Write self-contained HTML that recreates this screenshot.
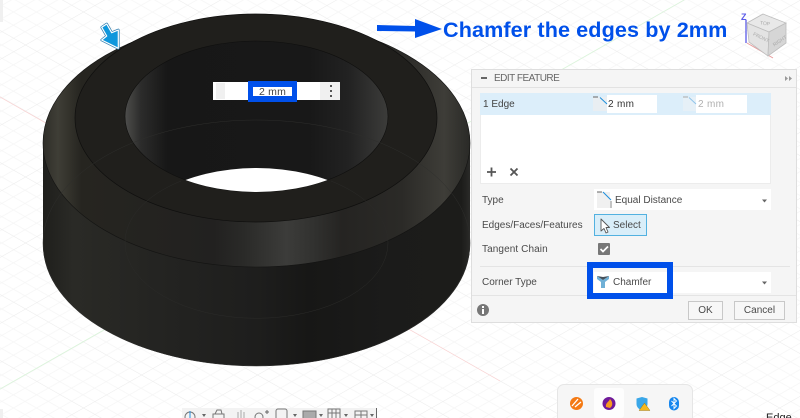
<!DOCTYPE html>
<html><head><meta charset="utf-8"><style>
html,body{margin:0;padding:0;background:#fff}
#r{position:relative;width:800px;height:418px;overflow:hidden;background:#fff;font-family:"Liberation Sans",sans-serif;font-size:10px;color:#4a4a4a}
#r svg{position:absolute;left:0;top:0}
.a{position:absolute;white-space:nowrap}
.b{position:absolute;box-sizing:border-box}
</style></head><body><div id="r">
<svg width="800" height="418" viewBox="0 0 800 418" xmlns="http://www.w3.org/2000/svg">
<defs>
<pattern id="g" width="50" height="50" patternUnits="userSpaceOnUse" patternTransform="matrix(1.16 .66 1.16 -.66 25 375)">
<path d="M10 0V50M20 0V50M30 0V50M40 0V50M0 10H50M0 20H50M0 30H50M0 40H50" stroke="#f6f6f6" stroke-width=".7" fill="none"/>
<path d="M0 0V50M0 0H50" stroke="#ebebeb" stroke-width=".9" fill="none"/>
</pattern>
<linearGradient id="w" gradientUnits="userSpaceOnUse" x1="43" x2="470" y1="0" y2="0">
<stop offset="0" stop-color="#1f1f1c"/><stop offset=".07" stop-color="#2a2a26"/><stop offset=".3" stop-color="#232321"/><stop offset=".5" stop-color="#1e1e1d"/><stop offset=".62" stop-color="#171716"/><stop offset=".8" stop-color="#1b1b1a"/><stop offset=".98" stop-color="#1c1c1a"/><stop offset="1" stop-color="#2a2a28"/>
</linearGradient>
<linearGradient id="c" gradientUnits="userSpaceOnUse" x1="43" x2="470" y1="0" y2="0">
<stop offset="0" stop-color="#2e2d28"/><stop offset=".035" stop-color="#3f3e36"/><stop offset=".09" stop-color="#262520"/><stop offset=".4" stop-color="#222120"/><stop offset=".47" stop-color="#2a2a28"/><stop offset=".57" stop-color="#3c3c3a"/><stop offset=".63" stop-color="#323230"/><stop offset=".7" stop-color="#252422"/><stop offset=".84" stop-color="#2b2a27"/><stop offset=".94" stop-color="#3e3d38"/><stop offset="1" stop-color="#2a2a27"/>
</linearGradient>
<linearGradient id="h" gradientUnits="userSpaceOnUse" x1="125" x2="388" y1="0" y2="0">
<stop offset="0" stop-color="#4e4e4c"/><stop offset=".06" stop-color="#2c2c2b"/><stop offset=".16" stop-color="#171717"/><stop offset=".7" stop-color="#181818"/><stop offset=".85" stop-color="#222"/><stop offset="1" stop-color="#3c3c3a"/>
</linearGradient>
<clipPath id="hc"><ellipse cx="256.5" cy="116.5" rx="131.5" ry="75.5"/></clipPath>
</defs>
<rect width="800" height="418" fill="url(#g)"/>
<rect x="0" y="0" width="3" height="22" fill="#f0f0f0"/>
<rect x="0" y="409" width="3" height="9" fill="#f0f0f0"/>
<path d="M0 97L500 381" stroke="#fbd0d0" stroke-width=".7"/>
<path d="M0 389L684 0" stroke="#d8f6d8" stroke-width=".7"/>
<path d="M43 143V245A213.5 121 0 0 0 470 245V143Z" fill="url(#w)"/>
<ellipse cx="256.5" cy="143" rx="213.5" ry="124" fill="url(#c)" stroke="#141413" stroke-width=".6"/>
<ellipse cx="256" cy="118" rx="181" ry="104" fill="#201f1c" stroke="#0f0f0e" stroke-width=".7"/>
<ellipse cx="256.5" cy="116.5" rx="131.5" ry="75.5" fill="url(#h)" stroke="#0f0f0e" stroke-width=".6"/>
<ellipse cx="256.5" cy="243" rx="131" ry="75" fill="#fff" clip-path="url(#hc)"/>
<ellipse cx="256.5" cy="243" rx="213.5" ry="123" fill="none" stroke="#2e2e2c" stroke-width=".5"/>
<path d="M125 243A131 75 0 0 0 388 243A131 75 0 0 0 331 181M181 181A131 75 0 0 0 125 243" fill="none" stroke="#2b2b29" stroke-width=".5"/>
<path d="M101.7 27.3L106.7 24L111.7 32.7L118.3 30V48.3L101.7 40L106.7 36Z" fill="#0f97dc" stroke="#2f7eb0" stroke-width="2.6" stroke-linejoin="round"/>
<path d="M101.7 27.3L106.7 24L111.7 32.7L118.3 30V48.3L101.7 40L106.7 36Z" fill="#0f97dc" stroke="#fff" stroke-width="1.2" stroke-linejoin="round"/>
<path d="M377 25L415 26V19L442 29L415 38V31.5L377 31Z" fill="#0050ea"/>
<path d="M746 20V43" stroke="#5a5ae8" stroke-width="1.3"/>
<path d="M747 43L773 58" stroke="#e89a9a" stroke-width="1"/>
<text x="741" y="20" font-family="Liberation Sans" font-size="9" font-weight="bold" fill="#5a5ae8">Z</text>
<path d="M763 14L786 23L769 32L747 23Z" fill="#e8e8e8" stroke="#bdbdbd" stroke-width=".8"/>
<path d="M747 23L769 32L768 56L749 42Z" fill="#e3e3e3" stroke="#bdbdbd" stroke-width=".8"/>
<path d="M769 32L786 23V43L768 56Z" fill="#d6d6d6" stroke="#bdbdbd" stroke-width=".8"/>
<text x="760" y="25" font-family="Liberation Sans" font-size="5" fill="#aaa" transform="rotate(8 765 23)">TOP</text>
<text x="751" y="38" font-family="Liberation Sans" font-size="5" fill="#aaa" transform="rotate(26 758 40)">FRONT</text>
<text x="771" y="44" font-family="Liberation Sans" font-size="5" fill="#aaa" transform="rotate(-34 777 40)">RIGHT</text>
</svg>

<div class="a" style="left:443px;top:17px;font-size:21.6px;line-height:26px;font-weight:bold;color:#0050ea;letter-spacing:.1px">Chamfer the edges by 2mm</div>

<!-- inline input -->
<div class="b" style="left:213px;top:82px;width:127px;height:18px;background:#fff"></div>
<div class="b" style="left:216px;top:83px;width:9px;height:16px;background:#f0f0f0"></div>
<div class="b" style="left:320px;top:82px;width:20px;height:18px;background:#f0f0f0"></div>
<div class="b" style="left:330px;top:85px;width:2px;height:2px;background:#555"></div>
<div class="b" style="left:330px;top:90px;width:2px;height:2px;background:#555"></div>
<div class="b" style="left:330px;top:95px;width:2px;height:2px;background:#555"></div>
<div class="b" style="left:248px;top:81px;width:49px;height:21px;background:#fff;border:solid #0050ea;border-width:6px 5px"></div>
<div class="a" style="left:259px;top:85.500px;font-size:10.500px;line-height:12px;color:#444;letter-spacing:.2px">2 mm</div>

<!-- panel -->
<div class="b" style="left:471px;top:69px;width:326px;height:254px;background:#f5f5f5;border:1px solid #dedede"></div>
<div class="b" style="left:472px;top:87px;width:324px;height:1px;background:#e2e2e2"></div>
<div class="b" style="left:481px;top:77px;width:6px;height:2px;background:#666"></div>
<div class="a" style="left:494px;top:72px;line-height:13px;font-size:10px;color:#666;letter-spacing:-.5px">EDIT FEATURE</div>

<div class="b" style="left:480px;top:93px;width:291px;height:91px;background:#fff;border:1px solid #ececec"></div>
<div class="b" style="left:480px;top:93px;width:291px;height:22px;background:#dceefa"></div>
<div class="a" style="left:483px;top:98px;line-height:14px;color:#444">1 Edge</div>
<div class="b" style="left:607px;top:95px;width:50px;height:18px;background:#fff"></div>
<div class="a" style="left:608px;top:98px;line-height:14px;color:#333;letter-spacing:.3px">2 mm</div>
<div class="b" style="left:696px;top:95px;width:51px;height:18px;background:#fff"></div>
<div class="a" style="left:698px;top:98px;line-height:14px;color:#b0b0b0;letter-spacing:.3px">2 mm</div>

<svg width="800" height="418" viewBox="0 0 800 418" xmlns="http://www.w3.org/2000/svg">
<path d="M785 76L788 78.500L785 81ZM789 76L792 78.500L789 81Z" fill="#999"/>
<rect x="593" y="97" width="14" height="14" fill="#e9eef2"/>
<path d="M593 97H598" stroke="#666" stroke-width="1"/><path d="M600 97.5L607 104" stroke="#1c8fdc" stroke-width="1"/>
<rect x="683" y="97" width="13" height="14" fill="#e6f0f7"/>
<path d="M683 97H688" stroke="#aaa" stroke-width="1"/><path d="M689 97.5L696 104" stroke="#90c4ea" stroke-width="1"/>
<path d="M487 172H496M491.5 167.5V176.5" stroke="#555" stroke-width="1.8"/>
<path d="M510.5 168.5L517.5 175.5M517.5 168.5L510.5 175.5" stroke="#555" stroke-width="1.8"/>
</svg>

<div class="a" style="left:482px;top:194px;line-height:14px">Type</div>
<div class="b" style="left:594px;top:189px;width:177px;height:21px;background:#fff"></div>
<svg width="800" height="418" viewBox="0 0 800 418" xmlns="http://www.w3.org/2000/svg">
<rect x="597" y="192" width="13" height="16" fill="#f0f0f0"/>
<path d="M597 192H602" stroke="#666" stroke-width="1"/><path d="M603 192L611 200" stroke="#1c8fdc" stroke-width="1"/><path d="M611 201V208" stroke="#888" stroke-width="1"/>
<path d="M762 199.5H767L764.500 202.500Z" fill="#666"/>
</svg>
<div class="a" style="left:615px;top:194px;line-height:14px">Equal Distance</div>

<div class="a" style="left:482px;top:219px;line-height:14px">Edges/Faces/Features</div>
<div class="b" style="left:594px;top:214px;width:53px;height:22px;background:#d9eef9;border:1px solid #52b1e0"></div>
<svg width="800" height="418" viewBox="0 0 800 418" xmlns="http://www.w3.org/2000/svg">
<path d="M601 219V231L604 228.500L606 233L608 232L606 227.500H609.500Z" fill="#fff" stroke="#555" stroke-width=".9" stroke-linejoin="round"/>
</svg>
<div class="a" style="left:613px;top:219px;line-height:14px">Select</div>

<div class="a" style="left:482px;top:243px;line-height:14px;letter-spacing:.1px">Tangent Chain</div>
<div class="b" style="left:598px;top:243px;width:12px;height:12px;background:#777;border-radius:1px"></div>
<svg width="800" height="418" viewBox="0 0 800 418" xmlns="http://www.w3.org/2000/svg">
<path d="M600.500 249L603 251.500L608 246.500" fill="none" stroke="#fff" stroke-width="1.7"/>
</svg>
<div class="b" style="left:480px;top:266px;width:310px;height:1px;background:#e4e4e4"></div>

<div class="b" style="left:472px;top:295px;width:324px;height:1px;background:#e4e4e4"></div>
<div class="a" style="left:482px;top:276px;line-height:14px">Corner Type</div>
<div class="b" style="left:594px;top:272px;width:177px;height:21px;background:#fff"></div>
<div class="b" style="left:587px;top:262px;width:86px;height:37px;border:6px solid #0050ea"></div>
<svg width="800" height="418" viewBox="0 0 800 418" xmlns="http://www.w3.org/2000/svg">
<path d="M597 276L603 280L609 276V279L605 282V288H601V282L597 279Z" fill="#6fb0d6"/>
<path d="M597 276L603 280L609 276L603 277Z" fill="#44505a"/>
<path d="M762 281.500H767L764.500 284.500Z" fill="#666"/>
</svg>
<div class="a" style="left:613px;top:276px;line-height:14px">Chamfer</div>

<div class="b" style="left:477px;top:304px;width:12px;height:12px;background:#777;border-radius:50%"></div>
<div class="b" style="left:482px;top:306px;width:2px;height:2px;background:#fff"></div>
<div class="b" style="left:482px;top:309px;width:2px;height:5px;background:#fff"></div>
<div class="b" style="left:688px;top:301px;width:35px;height:19px;background:#f7f7f7;border:1px solid #c8c8c8;text-align:center;line-height:17px">OK</div>
<div class="b" style="left:734px;top:301px;width:51px;height:19px;background:#f7f7f7;border:1px solid #c8c8c8;text-align:center;line-height:17px">Cancel</div>

<!-- bottom toolbar -->
<div class="b" style="left:182px;top:408px;width:195px;height:10px;background:#f3f3f3;border-right:1px solid #666"></div>
<svg width="800" height="418" viewBox="0 0 800 418" xmlns="http://www.w3.org/2000/svg">
<g fill="none" stroke="#777" stroke-width="1">
<circle cx="190" cy="417" r="5"/><path d="M190 411V418" stroke="#2a8fdc"/>
<path d="M213 414H224V420H213ZM215 414L217 410H221L222 414"/>
<path d="M238 418V412M241 418V410M244 418V412" stroke="#aaa"/>
<circle cx="259" cy="417" r="4"/><path d="M265 412H269M267 410V414" stroke="#666"/>
<rect x="276" y="409" width="11" height="11" rx="2"/>
<rect x="303" y="411" width="13" height="9" fill="#aaa"/>
<path d="M328 409H340V420H328ZM332 409V420M336 409V420M328 413H340" />
<path d="M355 411H367V420H355ZM361 411V420M355 415H367"/>
</g>
<g fill="#666"><path d="M202 414H206L204 417Z"/><path d="M293 414H297L295 417Z"/><path d="M319 414H323L321 417Z"/><path d="M344 414H348L346 417Z"/><path d="M370 414H374L372 417Z"/></g>
</svg>

<!-- tray -->
<div class="b" style="left:557px;top:384px;width:136px;height:44px;background:#f6f6f6;border:1px solid #e6e6e6;border-radius:7px"></div>
<div class="b" style="left:594px;top:388px;width:30px;height:30px;background:#fdfdfd;border-radius:3px"></div>
<svg width="800" height="418" viewBox="0 0 800 418" xmlns="http://www.w3.org/2000/svg">
<circle cx="576.500" cy="403.500" r="6.500" fill="#f47a14"/>
<path d="M572 406L578 399M575 407L581 402" stroke="#fff" stroke-width="1.300"/>
<circle cx="609" cy="403.500" r="6.500" fill="#6f1a9a"/>
<path d="M606 407C605 403 609 402 610 399C613 402 613 406 610 408Z" fill="#f79a1e"/>
<path d="M636.500 398.500L642 397L647.500 398.500V404C647.500 407 645 409.500 642 410.500C639 409.500 636.500 407 636.500 404Z" fill="#3aa7e8"/>
<path d="M644.500 403L650 410.500H639Z" fill="#f5b81c" stroke="#8a6a10" stroke-width=".4"/>
<rect x="669" y="397" width="10" height="13.500" rx="5" fill="#1787ee"/>
<path d="M671.500 401L676.500 406L674 408.500V398.500L676.500 401L671.500 406" fill="none" stroke="#fff" stroke-width=".9"/>
</svg>
<div class="a" style="left:766px;top:412px;font-size:11px;line-height:13px;color:#222">Edge</div>
</div></body></html>
